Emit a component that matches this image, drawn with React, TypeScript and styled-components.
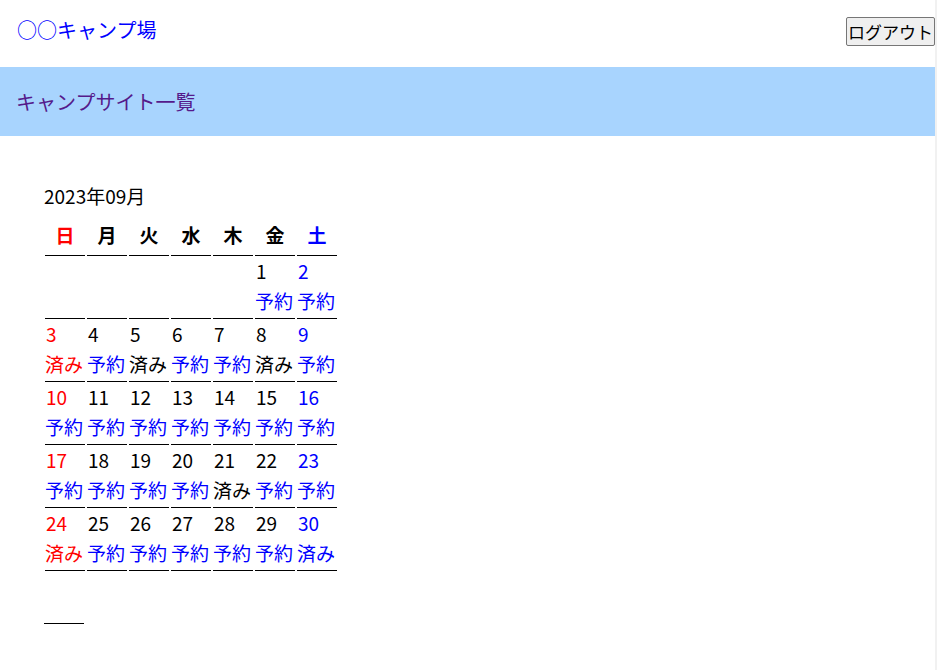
import styled, { createGlobalStyle } from "styled-components";

const GlobalStyle = createGlobalStyle`
  html {
    background: #f1f1f1;
  }
  body {
    margin: 0;
    width: 935px;
    min-height: 100vh;
    background: #fff;
    font-family: "Noto Sans CJK JP", "Noto Sans", sans-serif;
    color: #000;
  }
`;

const Header = styled.header`
  height: 67px;
  display: flex;
  justify-content: space-between;
  align-items: flex-start;
  padding: 17px 0 0 17px;
  box-sizing: border-box;
`;

const SiteLink = styled.a`
  color: #0000ff;
  text-decoration: none;
  font-size: 20px;
  line-height: 26px;
`;

const LogoutButton = styled.button`
  height: 29px;
  padding: 0 1px;
  font-family: inherit;
  font-size: 17px;
  color: #000;
  background: #efefef;
  border: 1px solid #767676;
  border-radius: 2px;
`;

const Band = styled.nav`
  height: 69px;
  background: #a8d4fe;
  display: flex;
  align-items: center;
  padding-left: 16px;
`;

const BandLink = styled.a`
  color: #551a8b;
  text-decoration: none;
  font-size: 20px;
`;

const Main = styled.main`
  padding: 47px 0 0 44px;
`;

const MonthTitle = styled.div`
  font-size: 19px;
  line-height: 26px;
  margin-bottom: 2px;
`;

const Table = styled.table`
  border-collapse: separate;
  border-spacing: 2px;
  margin-left: -1px;
`;

type Tone = "sun" | "sat" | "day";

const toneColor = (t: Tone) =>
  t === "sun" ? "#ff0000" : t === "sat" ? "#0000ff" : "#000";

const HeadCell = styled.th<{ $tone: Tone }>`
  width: 40px;
  padding: 0;
  height: 42px;
  font-size: 19px;
  font-weight: bold;
  color: ${({ $tone }) => toneColor($tone)};
  border-bottom: 1px solid #000;
  vertical-align: middle;
`;

const DayCell = styled.td<{ $tone: Tone }>`
  width: 40px;
  height: 61px;
  padding: 0;
  box-sizing: border-box;
  font-size: 19px;
  line-height: 30px;
  color: ${({ $tone }) => toneColor($tone)};
  border-bottom: 1px solid #000;
  vertical-align: top;
  white-space: nowrap;
`;

const DayNum = styled.div`
  padding-left: 1px;
  margin-top: -2px;
`;

const Reserve = styled.a`
  display: block;
  color: #0000ff;
  text-decoration: none;
`;

const Done = styled.span`
  display: block;
`;

const Footer = styled.div`
  width: 40px;
  margin-top: 50px;
  border-bottom: 1px solid #000;
`;

const weekdays = ["日", "月", "火", "水", "木", "金", "土"];

// 済み days
const booked = new Set([3, 5, 8, 21, 24, 30]);

const buildWeeks = () => {
  const weeks: (number | null)[][] = [];
  let week: (number | null)[] = [null, null, null, null, null];
  for (let d = 1; d <= 30; d++) {
    week.push(d);
    if (week.length === 7) {
      weeks.push(week);
      week = [];
    }
  }
  if (week.length) weeks.push(week);
  return weeks;
};

const toneOf = (i: number): Tone => (i === 0 ? "sun" : i === 6 ? "sat" : "day");

export default function App() {
  const weeks = buildWeeks();
  return (
    <>
      <GlobalStyle />
      <Header>
        <SiteLink href="#">○○キャンプ場</SiteLink>
        <LogoutButton type="button">ログアウト</LogoutButton>
      </Header>
      <Band>
        <BandLink href="#">キャンプサイト一覧</BandLink>
      </Band>
      <Main>
        <MonthTitle>2023年09月</MonthTitle>
        <Table>
          <thead>
            <tr>
              {weekdays.map((w, i) => (
                <HeadCell key={w} $tone={toneOf(i)}>
                  {w}
                </HeadCell>
              ))}
            </tr>
          </thead>
          <tbody>
            {weeks.map((week, wi) => (
              <tr key={wi}>
                {week.map((d, i) => (
                  <DayCell key={i} $tone={toneOf(i)}>
                    {d !== null && (
                      <>
                        <DayNum>{d}</DayNum>
                        {booked.has(d) ? (
                          <Done>済み</Done>
                        ) : (
                          <Reserve href="#">予約</Reserve>
                        )}
                      </>
                    )}
                  </DayCell>
                ))}
              </tr>
            ))}
          </tbody>
        </Table>
        <Footer />
      </Main>
    </>
  );
}
